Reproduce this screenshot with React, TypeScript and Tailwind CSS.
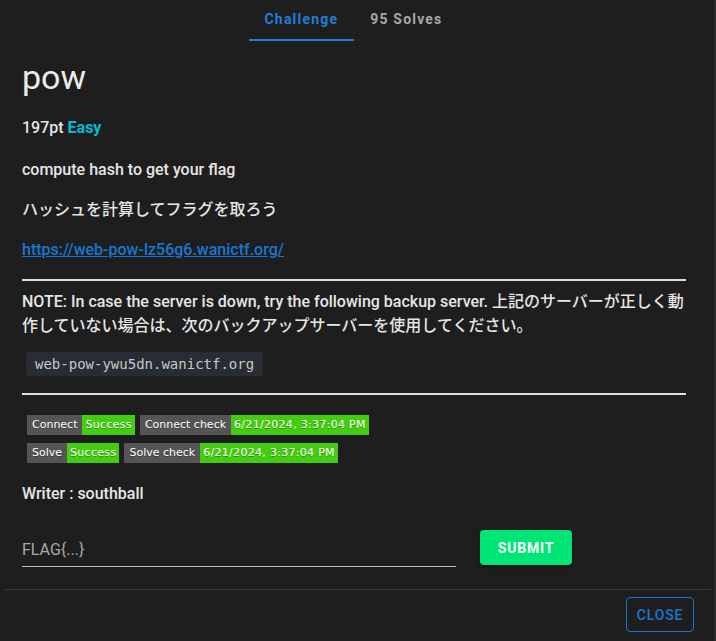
import React from "react";

function Badge({ label, value }: { label: string; value: string }) {
  return (
    <span className="inline-flex h-5 items-stretch font-['DejaVu_Sans',Verdana,sans-serif] text-[11px] leading-5 text-white [text-shadow:0_1px_0_rgba(1,1,1,0.3)]">
      <span className="bg-[#555555] px-[5px]">{label}</span>
      <span className="bg-[#44cc11] px-[3px] tracking-[0.3px]">{value}</span>
    </span>
  );
}

export default function App() {
  return (
    <div className="relative h-[641px] w-[716px] overflow-hidden bg-[#1e1e1e] font-['Roboto','Noto_Sans_CJK_JP',sans-serif] text-[#e6e6e6]">
      <div className="absolute right-0 top-0 h-full w-[2px] bg-[#2c2c2c]" />

      <nav className="flex h-[42px] justify-center pr-[9px]">
        <button className="relative px-4 pb-[5px] text-sm font-bold tracking-[1.2px] text-[#1f7fd8]">
          Challenge
          <span className="absolute bottom-[1px] left-0 right-0 h-[2px] bg-[#1f7fd8]" />
        </button>
        <button className="px-4 pb-[5px] text-sm font-bold tracking-[1.2px] text-[#a8a8a8]">
          95 Solves
        </button>
      </nav>

      <main className="px-[22px] pt-[14px]">
        <h1 className="text-[34px] leading-[42px] font-normal text-[#ececec]">pow</h1>
        <p className="mt-[18px] text-base font-medium leading-6">
          197pt <span className="font-bold text-[#00bcd4]">Easy</span>
        </p>

        <div className="mt-[18px] flex flex-col gap-4 text-base font-medium leading-6">
          <p>compute hash to get your flag</p>
          <p>ハッシュを計算してフラグを取ろう</p>
          <p>
            <a className="text-[#1976d2] underline" href="#">
              https://web-pow-lz56g6.wanictf.org/
            </a>
          </p>
        </div>

        <hr className="mr-2 mt-[17px] border-t-2 border-[#e0e0e0]" />

        <p className="mt-[9px] text-base font-medium leading-6">
          NOTE: In case the server is down, try the following backup server. 上記のサーバーが正しく動作していない場合は、次のバックアップサーバーを使用してください。
        </p>

        <div className="mt-[14px] pl-1">
          <code className="inline-block rounded-[3px] bg-[#272c35] px-[9px] py-[2px] font-['DejaVu_Sans_Mono',monospace] text-[14px] leading-5 text-[#c8c8c8]">
            web-pow-ywu5dn.wanictf.org
          </code>
        </div>

        <hr className="mr-2 mt-[17px] border-t-2 border-[#e0e0e0]" />

        <div className="mt-[20px] flex flex-col gap-2 pl-[5px]">
          <div className="flex gap-[5px]">
            <Badge label="Connect" value="Success" />
            <Badge label="Connect check" value="6/21/2024, 3:37:04 PM" />
          </div>
          <div className="flex gap-[5px]">
            <Badge label="Solve" value="Success" />
            <Badge label="Solve check" value="6/21/2024, 3:37:04 PM" />
          </div>
        </div>

        <p className="mt-[19px] text-base font-medium leading-6">Writer : southball</p>

        <div className="mt-[24px] flex items-start gap-6">
          <div className="mt-[8px] w-[434px] border-b border-[#bdbdbd] pb-[4px]">
            <input
              className="w-full bg-transparent text-base leading-6 text-[#e6e6e6] outline-none placeholder:text-[#a9a9a9]"
              placeholder="FLAG{...}"
            />
          </div>
          <button className="h-[35px] w-[92px] rounded bg-[#00e676] text-sm font-bold tracking-[0.8px] text-white shadow-[0_2px_3px_rgba(0,0,0,0.4)]">
            SUBMIT
          </button>
        </div>
      </main>

      <div className="mx-[5px] mt-[22px] h-px bg-[#3a3a3a]" />

      <footer className="flex justify-end px-[22px] pt-[7px]">
        <button className="h-[35px] w-[68px] rounded border border-[#1976d2] text-sm font-medium tracking-[0.8px] text-[#1976d2]">
          CLOSE
        </button>
      </footer>
    </div>
  );
}
